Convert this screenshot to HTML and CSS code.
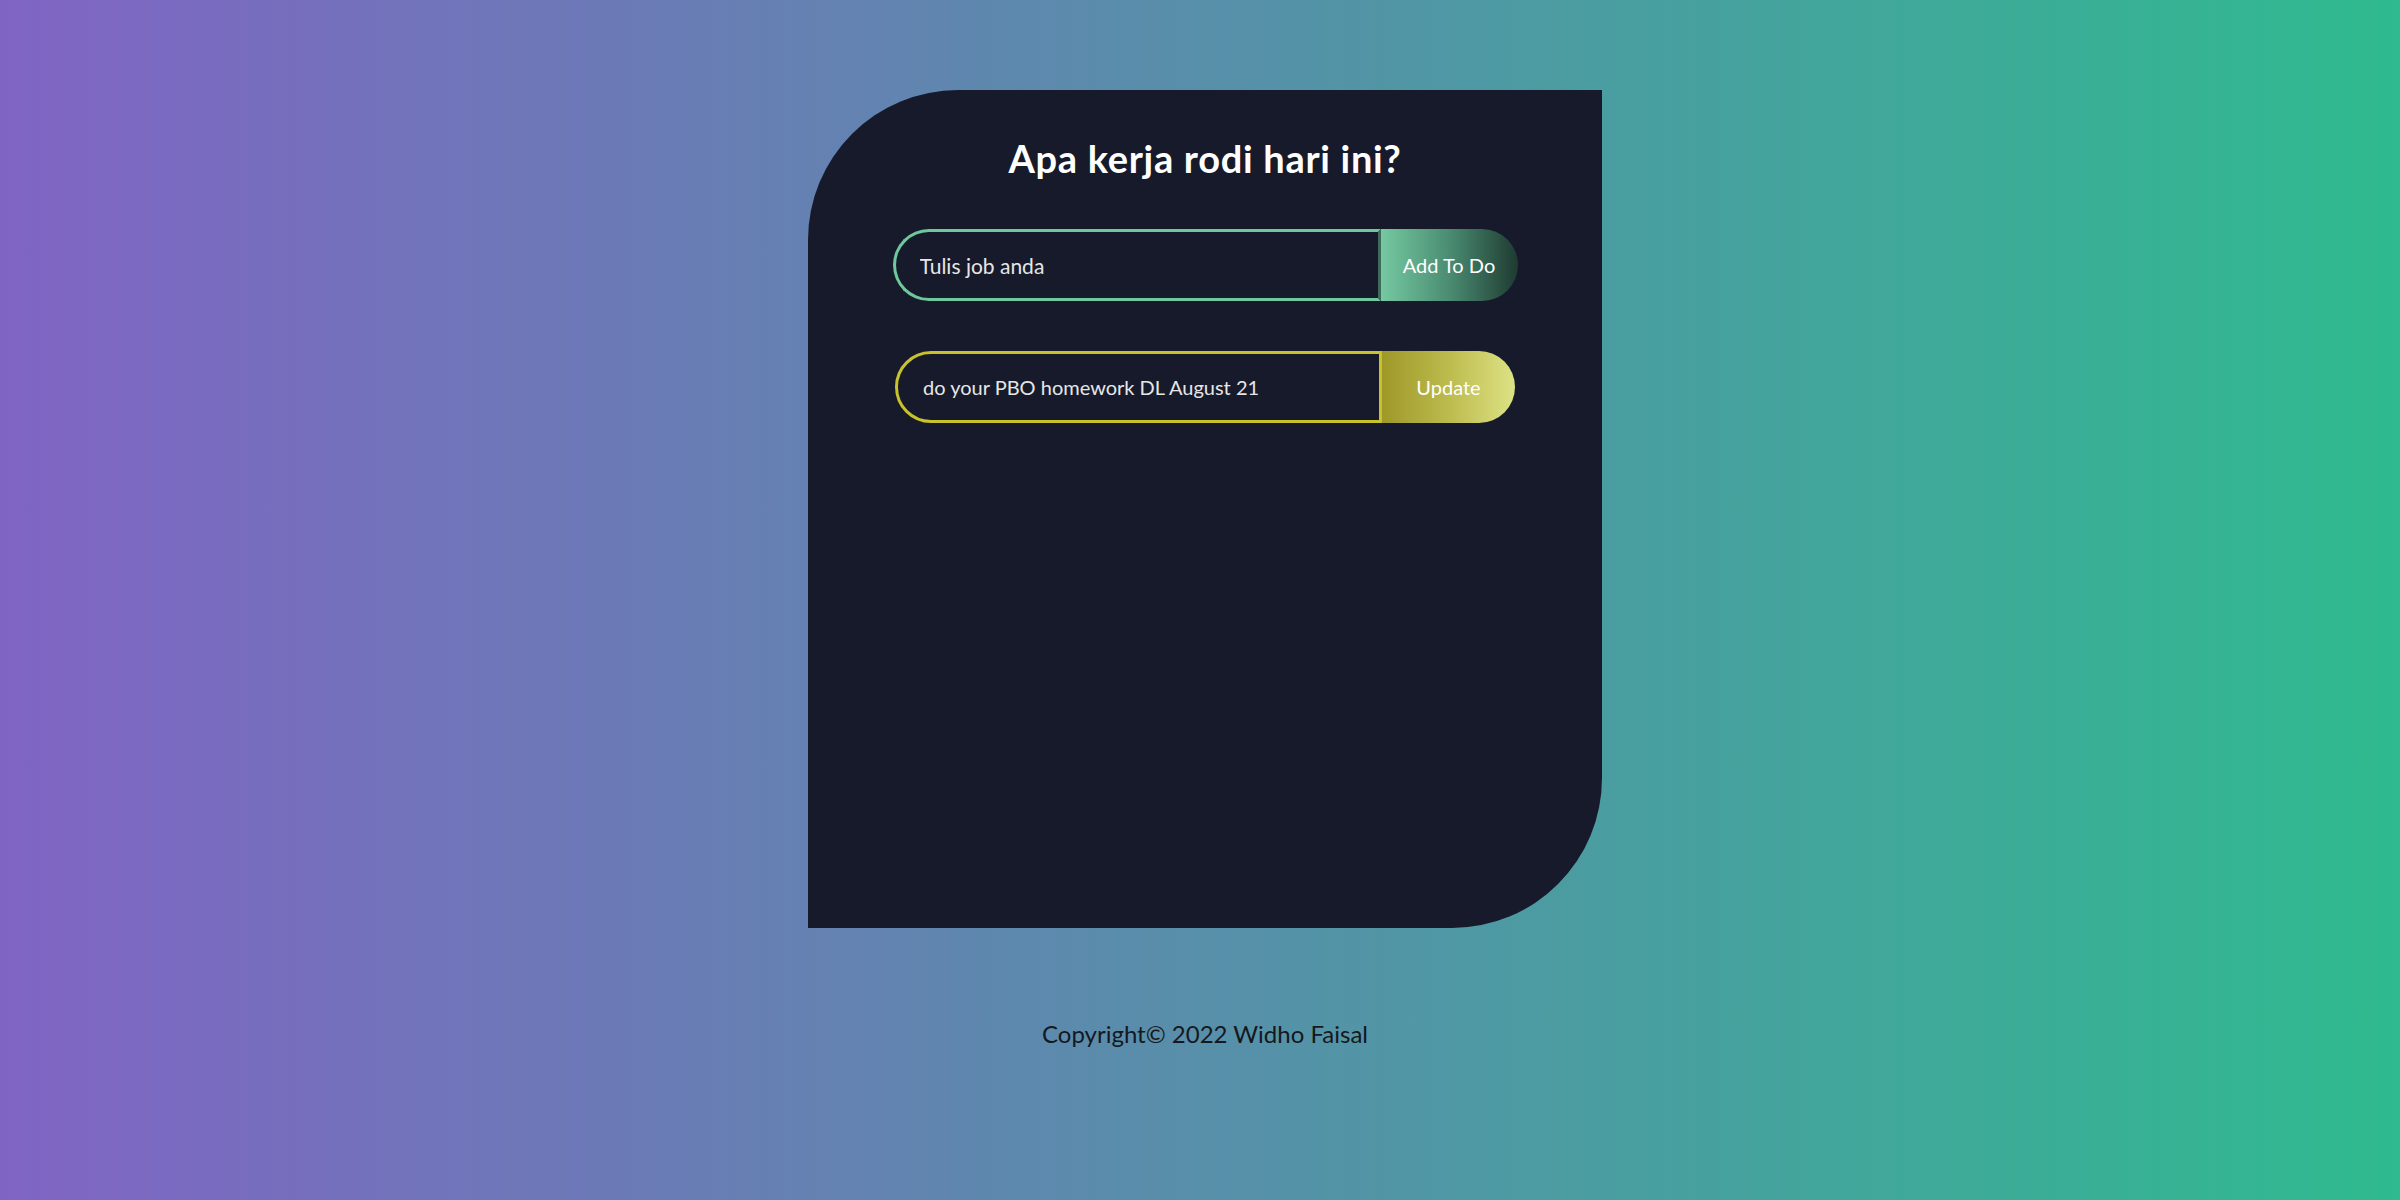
FILE: index.html
```html
<!DOCTYPE html>
<html lang="id">
<head>
<meta charset="utf-8">
<title>To Do</title>
<link rel="stylesheet" href="styles.css">
</head>
<body>
<div class="page">
  <main class="card">
    <h1 class="title">Apa kerja rodi hari ini?</h1>
    <form class="row row-add">
      <input class="field field-add" type="text" placeholder="Tulis job anda">
      <button class="btn btn-add" type="button">Add To Do</button>
    </form>
    <form class="row row-update">
      <input class="field field-update" type="text" value="do your PBO homework DL August 21">
      <button class="btn btn-update" type="button">Update</button>
    </form>
  </main>
  <footer class="footer">Copyright© 2022 Widho Faisal</footer>
</div>
</body>
</html>
```
FILE: styles.css
```css
html, body {
  margin: 0;
  height: 100%;
}
body {
  background: linear-gradient(90deg, #8064c4 0%, #2fba8f 100%);
  font-family: "Lato", "DejaVu Sans", sans-serif;
}
.page {
  display: flex;
  flex-direction: column;
  align-items: center;
  padding-top: 90px;
  padding-left: 10px;
}
.card {
  width: 794px;
  height: 838px;
  box-sizing: border-box;
  background: #171a2b;
  border-radius: 150px 0 150px 0;
  display: flex;
  flex-direction: column;
  align-items: center;
  padding-top: 45px;
}
.title {
  margin: 0;
  color: #ffffff;
  font-size: 38px;
  letter-spacing: 0.7px;
  font-weight: 700;
  line-height: 46px;
}
.row {
  display: flex;
  height: 72px;
  margin: 0;
}
.row-add {
  margin-top: 48px;
  width: 625px;
}
.row-update {
  margin-top: 50px;
  width: 620px;
}
.field {
  flex: 1;
  box-sizing: border-box;
  height: 72px;
  background: #171a2b;
  color: #e6e6e6;
  font-family: inherit;
  font-size: 20px;
  border-radius: 36px 0 0 36px;
  outline: none;
  padding: 0 0 0 24px;
}
.field::placeholder {
  color: #e6e6e6;
  opacity: 1;
}
.field-add {
  border: 3px solid #6fc79d;
  border-right-color: #3f6b5a;
  font-size: 21px;
}
.field-update {
  border: 3px solid #c9c22b;
  padding-left: 25px;
}
.btn {
  height: 72px;
  border: none;
  border-radius: 0 36px 36px 0;
  color: #ffffff;
  font-family: inherit;
  font-size: 20px;
  padding: 0;
  cursor: pointer;
}
.btn-add {
  width: 137px;
  background: linear-gradient(90deg, #75c9a1 0%, #4a8c72 50%, #1f3b31 100%);
}
.btn-update {
  width: 133px;
  background: linear-gradient(90deg, #9e9828 0%, #bcbb4e 50%, #dde284 100%);
}
.footer {
  margin-top: 91px;
  color: #151820;
  font-size: 24px;
  line-height: 30px;
}
```
